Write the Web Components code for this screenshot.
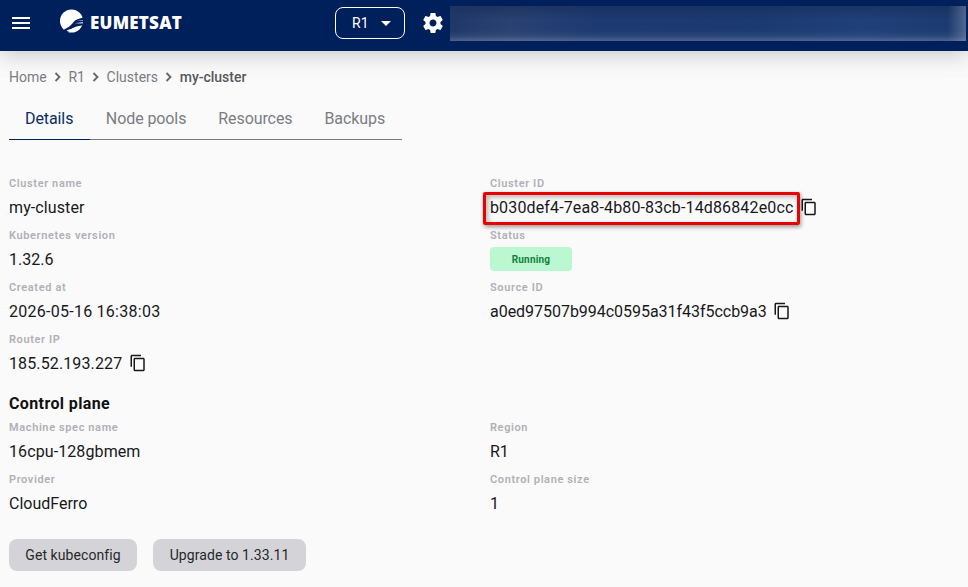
<!DOCTYPE html>
<html lang="en"><head><meta charset="utf-8"><title>my-cluster</title>
<style>
html,body{margin:0;height:100%;background:#fafafa;overflow:hidden}
body{font-family:Roboto,"Liberation Sans",sans-serif;color:#18181b}
</style></head><body>
<app-page>
  <app-header slot="header"></app-header>
  <bread-crumbs>
    <crumb-item>Home</crumb-item><crumb-item>R1</crumb-item><crumb-item>Clusters</crumb-item><crumb-item current>my-cluster</crumb-item>
  </bread-crumbs>
  <tab-bar>
    <tab-item active>Details</tab-item><tab-item>Node pools</tab-item><tab-item>Resources</tab-item><tab-item>Backups</tab-item>
  </tab-bar>
  <field-grid class="first">
    <detail-field label="Cluster name" style="--track:.1px">my-cluster</detail-field>
    <detail-field label="Cluster ID" copy highlight style="--track:.14px">b030def4-7ea8-4b80-83cb-14d86842e0cc</detail-field>
    <detail-field label="Kubernetes version">1.32.6</detail-field>
    <detail-field label="Status"><status-chip>Running</status-chip></detail-field>
    <detail-field label="Created at" style="--track:.26px">2026-05-16 16:38:03</detail-field>
    <detail-field label="Source ID" copy style="--track:-.03px">a0ed97507b994c0595a31f43f5ccb9a3</detail-field>
    <detail-field label="Router IP" copy style="--track:.12px">185.52.193.227</detail-field>
  </field-grid>
  <section-title>Control plane</section-title>
  <field-grid>
    <detail-field label="Machine spec name" style="--track:.1px">16cpu-128gbmem</detail-field>
    <detail-field label="Region">R1</detail-field>
    <detail-field label="Provider">CloudFerro</detail-field>
    <detail-field label="Control plane size">1</detail-field>
  </field-grid>
  <action-bar>
    <action-button style="--w:128px">Get kubeconfig</action-button>
    <action-button style="--w:153px">Upgrade to 1.33.11</action-button>
  </action-bar>
</app-page>
<script>
function def(name, html, init){
  customElements.define(name, class extends HTMLElement{
    constructor(){super();this.attachShadow({mode:'open'}).innerHTML=html;}
    connectedCallback(){ if(init) init(this); }
  });
}
const COPY='<svg viewBox="0 0 24 24" width="18" height="18" fill="#18181b"><path d="M16 1H4c-1.1 0-2 .9-2 2v14h2V3h12V1zm3 4H8c-1.1 0-2 .9-2 2v14c0 1.1.9 2 2 2h11c1.1 0 2-.9 2-2V7c0-1.1-.9-2-2-2zm0 16H8V7h11v14z"/></svg>';

def('app-page',`<style>
:host{display:block;height:587px;overflow:hidden}
main{padding:14px 0 0 9px}
::slotted(field-grid.first){margin-top:35px}
</style><slot name="header"></slot><main><slot></slot></main>`);

def('app-header',`<style>
:host{display:flex;align-items:flex-start;height:51px;box-sizing:border-box;background:#00205b;color:#fff;box-shadow:0 4px 22px rgba(0,0,0,.2);position:relative;z-index:1}
.menu{width:18px;height:12px;margin:17px 0 0 12px;flex:none}
.logo{display:flex;align-items:center;margin:8px 0 0 30px;width:275px;height:25px;flex:none}
.logo svg{flex:none}
.logo span{font:800 17px/24px "Open Sans",sans-serif;margin:4px 0 0 6px;letter-spacing:.22px}
.select{box-sizing:border-box;width:70px;height:32px;margin-top:7px;border:1px solid #fff;border-radius:8px;display:flex;align-items:center;padding-left:16px;font-size:14px;flex:none}
.select i{width:0;height:0;border:5px solid transparent;border-top-color:#fff;border-bottom:0;margin-left:12px}
.gear{flex:none;margin:11px 0 0 16px;display:block}
.blur{flex:none;width:516px;height:35px;margin:6px 0 0 5px;background:
 linear-gradient(0deg,rgba(135,150,180,.45) 0,rgba(110,130,165,.16) 14%,transparent 30%),
 linear-gradient(270deg,rgba(125,140,170,.55) 0,transparent 3.5%),
 linear-gradient(90deg,rgba(30,55,100,.5) 0,transparent 3%),
 linear-gradient(180deg,rgba(22,45,88,.6) 0,transparent 40%),
 linear-gradient(90deg,#21396a 0,#2a4272 12%,#1d3a72 28%,#1c3a72 60%,#20407a 80%,#1c3a70 100%)}
</style>
<svg class="menu" viewBox="0 0 18 12" fill="#fff"><path d="M0 0h18v2H0zM0 5h18v2H0zM0 10h18v2H0z"/></svg>
<div class="logo">
<svg width="24" height="24" viewBox="0 0 24 24"><circle cx="11.5" cy="12" r="11.5" fill="#fff"/><path d="M3 21C8 19 12 15.5 14 12.5 15.5 10.5 19 9.5 24 8.5V10.7L16.5 11.9 24 11.6V13.1L14.5 14.2 24 14.6V16.2C17 16.8 11 18.5 8 24H3z" fill="#00205b"/><path d="M6.5 21.7C10 19.6 14 18.8 19.5 19 16.5 23 9.5 23.6 6.5 21.7z" fill="#fff"/></svg>
<span>EUMETSAT</span></div>
<div class="select">R1<i></i></div>
<svg class="gear" width="24" height="24" viewBox="0 0 24 24" fill="#fff"><path d="M19.43 12.98c.04-.32.07-.64.07-.98s-.03-.66-.07-.98l2.11-1.65c.19-.15.24-.42.12-.64l-2-3.46c-.12-.22-.39-.3-.61-.22l-2.49 1c-.52-.4-1.08-.73-1.69-.98l-.38-2.65C14.46 2.18 14.25 2 14 2h-4c-.25 0-.46.18-.49.42l-.38 2.65c-.61.25-1.17.59-1.69.98l-2.49-1c-.23-.09-.49 0-.61.22l-2 3.46c-.13.22-.07.49.12.64l2.11 1.65c-.04.32-.07.65-.07.98s.03.66.07.98l-2.11 1.65c-.19.15-.24.42-.12.64l2 3.46c.12.22.39.3.61.22l2.49-1c.52.4 1.08.73 1.69.98l.38 2.65c.03.24.24.42.49.42h4c.25 0 .46-.18.49-.42l.38-2.65c.61-.25 1.17-.59 1.69-.98l2.49 1c.23.09.49 0 .61-.22l2-3.46c.12-.22.07-.49-.12-.64l-2.11-1.65zM12 15.5c-1.93 0-3.5-1.57-3.5-3.5s1.57-3.5 3.5-3.5 3.5 1.57 3.5 3.5-1.57 3.5-3.5 3.5z"/></svg>
<div class="blur"></div>`);

def('bread-crumbs',`<style>:host{display:flex;align-items:center;height:24px;font-size:14px;color:#7c7c83}</style><slot></slot>`);
def('crumb-item',`<style>
:host{display:inline-flex;align-items:center}
:host([current]){color:#57575d;font-weight:500;letter-spacing:-.02px}
svg{width:22px;height:16px;flex:none;margin-right:-.3px}
:host([current]) svg{display:none}
</style><slot></slot><svg viewBox="0 0 22 16" fill="none" stroke="#66666c" stroke-width="1.8"><path d="M8.5 4l4 4-4 4"/></svg>`);

def('tab-bar',`<style>:host{display:flex;width:393px;height:43px;margin-top:8px;box-sizing:border-box;border-bottom:1px solid #77777c}</style><slot></slot>`);
def('tab-item',`<style>
:host{display:flex;align-items:center;padding:0 16px;font-size:16px;letter-spacing:-.09px;color:#7c7c83;margin-bottom:-1px;border-bottom:1px solid transparent;white-space:nowrap}
:host([active]){color:#0c2c66;border-bottom-color:#00205b;padding-right:16.5px}
</style><slot></slot>`);

def('field-grid',`<style>:host{display:grid;grid-template-columns:481px 1fr;row-gap:4px}</style><slot></slot>`);
def('detail-field',`<style>
:host{display:block}
.l{height:16px;margin-top:1px;margin-bottom:-1px;font-size:11px;line-height:16px;font-weight:600;letter-spacing:.62px;color:#b0b0b6}
.v{height:32px;display:flex;align-items:center;font-size:16px;color:#18181b;letter-spacing:var(--track,0)}
.t{position:relative;white-space:nowrap}
:host([highlight]) .t::after{content:"";position:absolute;left:-7px;right:-7px;height:33px;top:50%;margin-top:-15px;box-sizing:border-box;border:3px solid #ea0000;border-radius:2px;box-shadow:1px 2px 4px rgba(0,0,0,.4),inset 2px 2px 5px rgba(0,0,0,.28)}
svg{margin-left:6.5px;flex:none;display:none}
:host([copy]) svg{display:block}
</style><div class="l"></div><div class="v"><span class="t"><slot></slot></span>${COPY}</div>`,
 el=>{el.shadowRoot.querySelector('.l').textContent=el.getAttribute('label');});

def('status-chip',`<style>
:host{display:flex;align-items:center;justify-content:center;width:82px;height:24px;border-radius:4px;background:#bbf7d0;color:#15803d;font-size:10px;font-weight:700;letter-spacing:.2px}
</style><slot></slot>`);
def('section-title',`<style>:host{display:flex;align-items:center;height:32px;margin-top:8px;font-size:16px;font-weight:700;letter-spacing:.38px;color:#111}</style><slot></slot>`);
def('action-bar',`<style>:host{display:flex;gap:16px;margin-top:20px}</style><slot></slot>`);
def('action-button',`<style>
:host{display:flex;align-items:center;justify-content:center;box-sizing:border-box;width:var(--w);height:32px;border-radius:8px;background:#d4d4d8;font-size:14px;font-weight:400;letter-spacing:.08px;color:#27272a;white-space:nowrap}
</style><slot></slot>`);
</script>
</body></html>
